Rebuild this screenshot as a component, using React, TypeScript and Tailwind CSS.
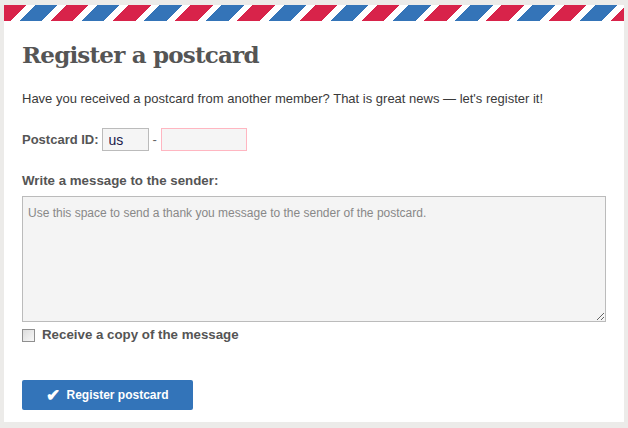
import { useState } from 'react';

export default function App() {
  const [copy, setCopy] = useState(false);

  return (
    <div className="min-h-screen w-full bg-[#ecebe9] pt-[5px] pl-[4px] font-['Liberation_Sans',Arial,sans-serif]">
      <div className="w-[620px] h-[417px] bg-white">
        {/* Airmail stripe */}
        <div className="h-[16px] w-full bg-[repeating-linear-gradient(135deg,#d8234a_0px,#d8234a_16px,#ffffff_16px,#ffffff_22px,#3474b8_22px,#3474b8_38px,#ffffff_38px,#ffffff_44px)]" />

        <div className="px-[18px]">
          <h1 className="mt-[17px] text-[23px] leading-[34px] font-bold text-[#555] font-['DejaVu_Serif',Georgia,serif] tracking-[-0.8px]">
            Register a postcard
          </h1>

          <p className="mt-[19px] text-[13px] leading-[16px] text-[#3a3a3a]">
            Have you received a postcard from another member? That is great news — let's register it!
          </p>

          <div className="mt-[21px] flex items-center h-[23px]">
            <label className="text-[13px] font-bold text-[#555] mr-[3px]">Postcard ID:</label>
            <input
              defaultValue="us"
              className="w-[47px] h-[23px] border border-[#bbb] bg-[#f5f5f5] px-[6px] text-[14px] text-[#1a1a4a] outline-none"
            />
            <span className="mx-[4px] text-[13px] text-[#666]">-</span>
            <input className="w-[86px] h-[23px] border border-[#ffb6c1] bg-[#f5f5f5] px-[6px] text-[14px] outline-none" />
          </div>

          <div className="mt-[22px] text-[13.3px] leading-[16px] font-bold text-[#555]">
            Write a message to the sender:
          </div>

          <textarea
            placeholder="Use this space to send a thank you message to the sender of the postcard."
            className="mt-[7px] block w-[584px] h-[126px] border border-[#bbb] bg-[#f4f4f4] px-[5px] pt-[8px] pb-[6px] text-[12px] leading-[16px] text-[#333] placeholder:text-[#888] outline-none resize-y"
          />

          <label className="mt-[5px] flex items-center gap-[7px] cursor-pointer">
            <input
              type="checkbox"
              checked={copy}
              onChange={() => setCopy(!copy)}
              className="appearance-none w-[13px] h-[13px] m-0 border border-[#8f8f8f] bg-[linear-gradient(135deg,#dcdcdc,#f8f8f8)] checked:bg-[#3374b9]"
            />
            <span className="text-[13.3px] leading-[16px] font-bold text-[#555]">Receive a copy of the message</span>
          </label>

          <button className="mt-[37px] w-[171px] h-[30px] rounded-[2px] bg-[#3374b9] text-white text-[12px] font-bold flex items-center justify-center gap-[6px]">
            <span className="text-[17px] leading-none">✔</span>
            Register postcard
          </button>
        </div>
      </div>
    </div>
  );
}
